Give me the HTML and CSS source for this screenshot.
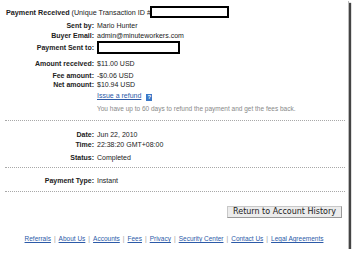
FILE: index.html
```html
<!DOCTYPE html>
<html lang="en">
<head>
  <meta charset="UTF-8">
  <title>Payment Details</title>
  <link rel="stylesheet" href="styles.css">
</head>
<body>

  <div class="frame">

    <div class="title">
      <b>Payment Received</b>&nbsp;(Unique Transaction ID #<span class="blackout txn"></span>
    </div>

    <div class="row first"><span class="label">Sent by:</span><span>Mario Hunter</span></div>
    <div class="row"><span class="label">Buyer Email:</span><span>admin@minuteworkers.com</span></div>
    <div class="row sentto"><span class="label">Payment Sent to:</span><span class="blackout payee"></span></div>

    <div class="row amount"><span class="label">Amount received:</span><span>$11.00 USD</span></div>
    <div class="row fee"><span class="label">Fee amount:</span><span>-$0.06 USD</span></div>
    <div class="row net"><span class="label">Net amount:</span><span>$10.94 USD</span></div>
    <div class="row refund"><span></span><span><a href="#">Issue a refund</a> <span class="help">?</span></span></div>
    <div class="row note"><span></span><span>You have up to 60 days to refund the payment and get the fees back.</span></div>

    <hr class="dots first-dots">

    <div class="row date"><span class="label">Date:</span><span>Jun 22, 2010</span></div>
    <div class="row"><span class="label">Time:</span><span>22:38:20 GMT+08:00</span></div>
    <div class="row status"><span class="label">Status:</span><span>Completed</span></div>

    <hr class="dots">

    <div class="row ptype"><span class="label">Payment Type:</span><span>Instant</span></div>

    <hr class="dots">

    <div class="actions">
      <button type="button">Return to Account History</button>
    </div>

    <div class="footer">
      <a href="#">Referrals</a><span class="sep">|</span><a href="#">About Us</a><span class="sep">|</span><a href="#">Accounts</a><span class="sep">|</span><a href="#">Fees</a><span class="sep">|</span><a href="#">Privacy</a><span class="sep">|</span><a href="#">Security Center</a><span class="sep">|</span><a href="#">Contact Us</a><span class="sep">|</span><a href="#">Legal Agreements</a>
    </div>

  </div>

</body>
</html>
```

FILE: styles.css
```css
body {
  margin: 0;
  background-color: #ffffff;
  font-family: "Liberation Sans", Arial, sans-serif;
  font-size: 7px;
  color: #222;
}

.frame {
  width: 348px;
  height: 249px;
  box-sizing: border-box;
  padding-top: 6px;
  background-color: #ffffff;
  box-shadow: 1px 1px 0 #bbb, 3px 3px 1px #444;
}

.title {
  display: flex;
  align-items: center;
  height: 12px;
  padding-left: 6px;
  font-size: 7.2px;
}

.title b {
  color: #222;
}

.blackout {
  display: inline-block;
  box-sizing: border-box;
  border: 2px solid #000;
  background-color: #fff;
}

.txn {
  width: 79px;
  height: 12px;
  margin-left: -1px;
}

.payee {
  width: 83px;
  height: 13px;
}

.row {
  display: grid;
  grid-template-columns: 94px auto;
  column-gap: 3px;
  align-items: center;
  height: 10px;
}

.label {
  text-align: right;
  font-weight: bold;
  color: #222;
}

.row.first {
  margin-top: 2px;
}

.row.sentto {
  height: 13px;
  margin-top: 1px;
}

.row.amount {
  margin-top: 4px;
}

.row.fee {
  margin-top: 3px;
  height: 9px;
}

.row.net {
  height: 9px;
}

.row.refund {
  margin-top: 2px;
}

.row.refund a {
  color: #2c5aa8;
}

.help {
  display: inline-block;
  width: 6px;
  height: 7px;
  margin-left: 3px;
  background-color: #3a78c8;
  color: #fff;
  font-size: 6px;
  font-weight: bold;
  line-height: 7px;
  text-align: center;
  vertical-align: -1px;
}

.row.note {
  margin-top: 2px;
  color: #888;
  font-size: 6.5px;
}

.dots {
  border: none;
  border-top: 1px dotted #a8a8a8;
  height: 0;
  margin: 0 3px 0 5px;
}

.dots.first-dots {
  margin-top: 7px;
}

.row.date {
  margin-top: 8px;
}

.row.status {
  margin-top: 3px;
  margin-bottom: 5px;
}

.row.ptype {
  margin-top: 7px;
  margin-bottom: 6px;
}

.actions {
  display: flex;
  justify-content: flex-end;
  padding-right: 6px;
  margin-top: 14px;
}

button {
  height: 12px;
  padding: 0 5px;
  font-family: "DejaVu Sans", sans-serif;
  font-size: 8px;
  line-height: 10px;
  color: #222;
  background-color: #ececec;
  border: 1px solid #c8c8c8;
  border-right-color: #999;
  border-bottom-color: #999;
  border-radius: 0;
}

.footer {
  margin-top: 17px;
  text-align: center;
  font-size: 6.5px;
}

.footer a {
  color: #2c5aa8;
}

.sep {
  color: #999;
  margin: 0 3px;
}
```
